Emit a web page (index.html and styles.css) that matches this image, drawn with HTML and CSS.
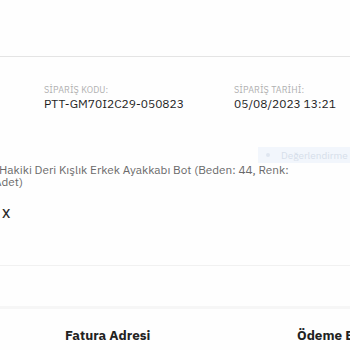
FILE: index.html
```html
<!DOCTYPE html>
<html lang="tr">
<head>
<meta charset="utf-8">
<link rel="stylesheet" href="styles.css">
</head>
<body>
<div class="page">
  <div class="top"></div>
  <div class="info">
    <div class="col col-code">
      <div class="label">SİPARİŞ KODU:</div>
      <div class="value">PTT-GM70I2C29-050823</div>
    </div>
    <div class="col">
      <div class="label">SİPARİŞ TARİHİ:</div>
      <div class="value">05/08/2023 13:21</div>
    </div>
  </div>
  <div class="product">
    <button class="ghost"><span class="dot"></span>Değerlendirme Bilgisi</button>
    <p class="name">Hakiki Deri Kışlık Erkek Ayakkabı Bot (Beden: 44, Renk:<br>Adet)</p>
    <div class="qty">X</div>
  </div>
  <div class="divider"></div>
  <div class="band"></div>
  <div class="heads">
    <h3 class="head head-bill">Fatura Adresi</h3>
    <h3 class="head head-pay">Ödeme Bilgileri</h3>
  </div>
</div>
</body>
</html>
```
FILE: styles.css
```css
html, body {
  margin: 0;
  padding: 0;
  background: #fefefe;
  overflow: hidden;
}
body {
  width: 350px;
  height: 350px;
  font-family: "IBM Plex Sans", Roboto, "Noto Sans", sans-serif;
  color: #222;
}
.page {
  position: relative;
  width: 350px;
  height: 350px;
  overflow: hidden;
}
.top {
  height: 56px;
  border-bottom: 1px solid #e4e4e4;
}
.info {
  display: flex;
  padding: 27px 0 0 44px;
}
.col-code {
  width: 190px;
  flex-shrink: 0;
}
.label {
  font-size: 9px;
  line-height: 12px;
  color: #b0b0b0;
  letter-spacing: 0.1px;
}
.value {
  font-size: 12px;
  line-height: 16px;
  color: #1e1e1e;
  white-space: nowrap;
}
.product {
  position: relative;
  margin-left: -6px;
  padding-top: 52px;
}
.name {
  position: relative;
  margin: 0;
  font-size: 11.75px;
  line-height: 12px;
  color: #6a6a6a;
  text-indent: 5px;
  white-space: nowrap;
}
.ghost {
  position: absolute;
  top: 35px;
  left: 264px;
  width: 100px;
  height: 16px;
  border: 0;
  padding: 0 0 0 8px;
  background: #f2f6fc;
  color: #d6deea;
  font-family: inherit;
  font-size: 10px;
  text-align: left;
  white-space: nowrap;
  display: flex;
  align-items: center;
  gap: 11px;
}
.dot {
  width: 4px;
  height: 4px;
  background: #dfe6f0;
  border-radius: 50%;
  flex-shrink: 0;
}
.qty {
  margin-top: 19px;
  margin-left: 8px;
  font-size: 13px;
  line-height: 14px;
  font-weight: 500;
  color: #2a2a2a;
}
.divider {
  margin-top: 44px;
  height: 1px;
  background: #f1f1f1;
}
.band {
  margin-top: 40px;
  height: 3px;
  background: #f6f6f6;
}
.heads {
  display: flex;
  padding-top: 18px;
}
.head {
  margin: 0;
  font-size: 13.5px;
  line-height: 16px;
  font-weight: 700;
  color: #222;
  white-space: nowrap;
}
.head-bill {
  margin-left: 65px;
  width: 232px;
  flex-shrink: 0;
}
```
